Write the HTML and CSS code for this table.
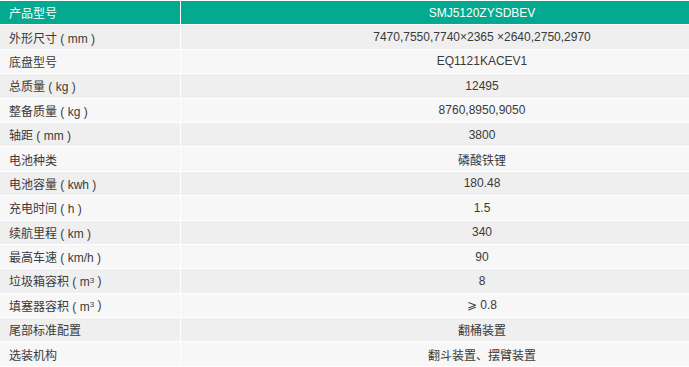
FILE: index.html
```html
<!DOCTYPE html>
<html lang="zh-CN">
<head>
<meta charset="utf-8">
<title>参数表</title>
<link rel="stylesheet" href="styles.css">
</head>
<body>
<div class="spec">
  <div class="row head"><div class="k">产品型号</div><div class="v">SMJ5120ZYSDBEV</div></div>
  <div class="row odd"><div class="k">外形尺寸 ( mm )</div><div class="v">7470,7550,7740×2365 ×2640,2750,2970</div></div>
  <div class="row even"><div class="k">底盘型号</div><div class="v">EQ1121KACEV1</div></div>
  <div class="row odd"><div class="k">总质量 ( kg )</div><div class="v">12495</div></div>
  <div class="row even"><div class="k">整备质量 ( kg )</div><div class="v">8760,8950,9050</div></div>
  <div class="row odd"><div class="k">轴距 ( mm )</div><div class="v">3800</div></div>
  <div class="row even"><div class="k">电池种类</div><div class="v">磷酸铁锂</div></div>
  <div class="row odd"><div class="k">电池容量 ( kwh )</div><div class="v">180.48</div></div>
  <div class="row even"><div class="k">充电时间 ( h )</div><div class="v">1.5</div></div>
  <div class="row odd"><div class="k">续航里程 ( km )</div><div class="v">340</div></div>
  <div class="row even"><div class="k">最高车速 ( km/h )</div><div class="v">90</div></div>
  <div class="row odd"><div class="k">垃圾箱容积 ( m<sup>3</sup> )</div><div class="v">8</div></div>
  <div class="row even"><div class="k">填塞器容积 ( m<sup>3</sup> )</div><div class="v">⩾ 0.8</div></div>
  <div class="row odd"><div class="k">尾部标准配置</div><div class="v">翻桶装置</div></div>
  <div class="row even"><div class="k">选装机构</div><div class="v">翻斗装置、摆臂装置</div></div>
</div>
</body>
</html>
```

FILE: styles.css
```css
html, body {
  margin: 0;
  padding: 0;
  background: #ffffff;
  overflow: hidden;
}
body {
  width: 689px;
  height: 367px;
  font-family: "Liberation Sans", "Noto Sans CJK SC", sans-serif;
  font-size: 12px;
  color: #3a3a3a;
}
.spec {
  width: 783px;
  padding-top: 1px;
  display: flex;
  flex-direction: column;
  gap: 1px;
}
.row {
  display: flex;
  gap: 1px;
  height: 23.4px;
}
.k, .v {
  display: flex;
  align-items: center;
  white-space: pre;
}
.k {
  width: 171px;
  padding-left: 9px;
  flex: none;
}
.v {
  flex: 1;
  justify-content: center;
}
.head .k, .head .v {
  background: #03aa90;
  color: #ffffff;
}
.odd .k, .odd .v {
  background: #efefef;
}
.even .k, .even .v {
  background: #f7f7f7;
}
sup {
  font-size: 8px;
  line-height: 0;
  vertical-align: 5px;
}
```
